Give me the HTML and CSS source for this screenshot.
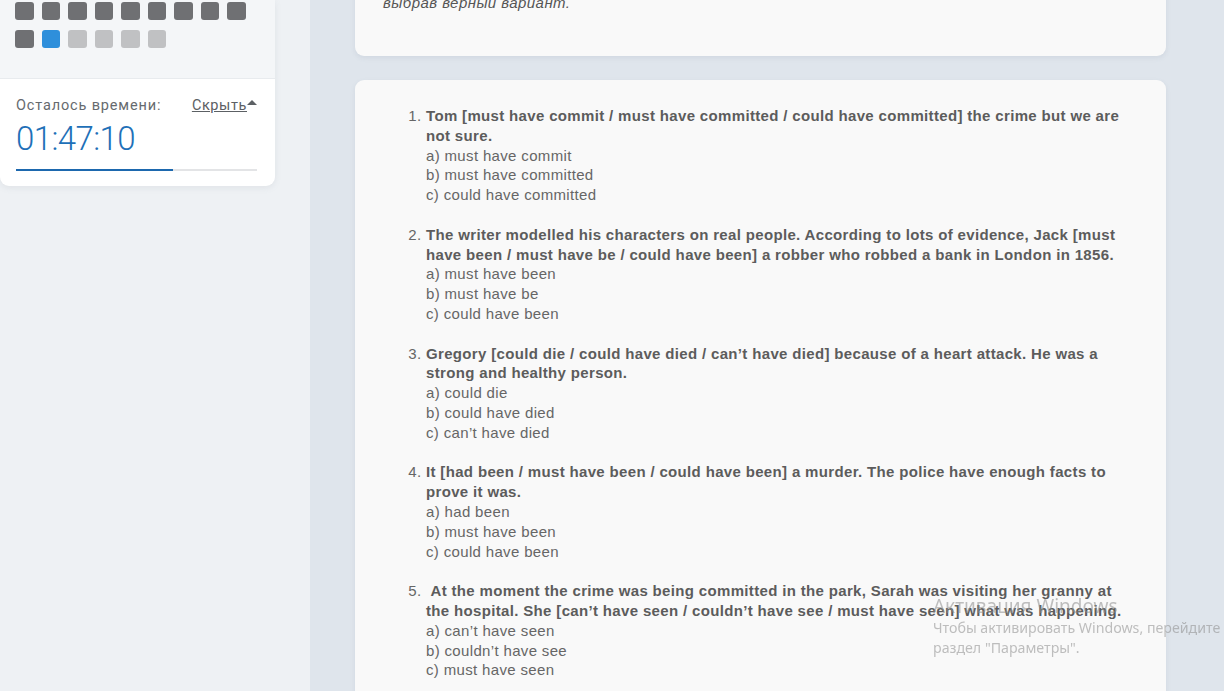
FILE: index.html
```html
<!DOCTYPE html>
<html lang="ru">
<head>
<meta charset="utf-8">
<title>Тест</title>
<link rel="stylesheet" href="styles.css">
</head>
<body>
<div class="page">
  <aside class="sidebar">
    <div class="nav-card">
      <div class="nav-grid">
        <span class="sq done"></span><span class="sq done"></span><span class="sq done"></span>
        <span class="sq done"></span><span class="sq done"></span><span class="sq done"></span>
        <span class="sq done"></span><span class="sq done"></span><span class="sq done"></span>
        <span class="sq done"></span><span class="sq current"></span><span class="sq"></span>
        <span class="sq"></span><span class="sq"></span><span class="sq"></span>
      </div>
      <div class="timer">
        <div class="timer-head">
          <span class="timer-label">Осталось времени:</span>
          <a class="timer-hide">Скрыть</a><span class="caret"></span>
        </div>
        <div class="timer-value">01:47:10</div>
        <div class="progress"><div class="progress-fill" style="width:65%"></div></div>
      </div>
    </div>
  </aside>
  <main class="main">
    <section class="card card-intro">
      <p class="intro">выбрав верный вариант.</p>
    </section>
    <section class="card card-questions">
      <ol class="questions">
        <li>
          <p class="q">Tom [must have commit / must have committed / could have committed] the crime but we are not sure.</p>
          <p class="a">a) must have commit</p>
          <p class="a">b) must have committed</p>
          <p class="a">c) could have committed</p>
        </li>
        <li>
          <p class="q">The writer modelled his characters on real people. According to lots of evidence, Jack [must have been / must have be / could have been] a robber who robbed a bank in London in 1856.</p>
          <p class="a">a) must have been</p>
          <p class="a">b) must have be</p>
          <p class="a">c) could have been</p>
        </li>
        <li>
          <p class="q">Gregory [could die / could have died / can’t have died] because of a heart attack. He was a strong and healthy person.</p>
          <p class="a">a) could die</p>
          <p class="a">b) could have died</p>
          <p class="a">c) can’t have died</p>
        </li>
        <li>
          <p class="q">It [had been / must have been / could have been] a murder. The police have enough facts to prove it was.</p>
          <p class="a">a) had been</p>
          <p class="a">b) must have been</p>
          <p class="a">c) could have been</p>
        </li>
        <li>
          <p class="q">&nbsp;At the moment the crime was being committed in the park, Sarah was visiting her granny at the hospital. She [can’t have seen / couldn’t have see / must have seen] what was happening.</p>
          <p class="a">a) can’t have seen</p>
          <p class="a">b) couldn’t have see</p>
          <p class="a">c) must have seen</p>
        </li>
      </ol>
    </section>
  </main>
</div>
<div class="watermark">
  <div class="wm-title">Активация Windows</div>
  <div class="wm-text">Чтобы активировать Windows, перейдите в<br>раздел "Параметры".</div>
</div>
</body>
</html>
```

FILE: styles.css
```css
* { box-sizing: border-box; }
html, body {
  margin: 0;
  padding: 0;
  height: 691px;
  overflow: hidden;
}
body {
  font-family: "Liberation Sans", Arial, sans-serif;
  background: #dfe5ec;
}
.page {
  display: flex;
  min-height: 691px;
}
.sidebar {
  width: 310px;
  flex: 0 0 310px;
  background: #eef1f4;
  padding-right: 35px;
}
.nav-card {
  background: #ffffff;
  border-radius: 0 0 9px 9px;
  box-shadow: 0 2px 6px rgba(120, 135, 150, 0.12);
  overflow: hidden;
}
.nav-grid {
  background: #f4f6f8;
  padding: 2px 15px 0 15px;
  height: 79px;
  display: grid;
  grid-template-columns: repeat(9, 18.5px);
  grid-auto-rows: 18px;
  column-gap: 8px;
  row-gap: 10px;
  border-bottom: 1px solid #e8ebee;
}
.sq {
  display: block;
  border-radius: 3px;
  background: #c0c1c3;
}
.sq.done { background: #6f7073; }
.sq.current { background: #2e8fdb; }
.timer {
  padding: 17px 18px 15px 16px;
}
.timer-head {
  display: flex;
  align-items: center;
  font-family: Roboto, "Liberation Sans", sans-serif;
  font-size: 14.5px;
  letter-spacing: 0.85px;
  color: #666a6e;
  height: 18px;
}
.timer-label { flex: 1; }
.timer-hide {
  color: #5c6064;
  text-decoration: underline;
  letter-spacing: 0.6px;
}
.caret {
  width: 0;
  height: 0;
  border-left: 5px solid transparent;
  border-right: 5px solid transparent;
  border-bottom: 5px solid #5c6064;
  margin-left: 0;
  margin-top: -6px;
}
.timer-value {
  font-family: Roboto, "Liberation Sans", sans-serif;
  font-weight: 300;
  font-size: 33px;
  line-height: 40px;
  letter-spacing: -0.6px;
  color: #1e70b8;
  margin-top: 5px;
}
.progress {
  height: 2px;
  background: #e3e4e6;
  margin-top: 10px;
}
.progress-fill {
  height: 2px;
  background: #1d68ae;
}
.main {
  flex: 1;
  padding: 0 58px 0 45px;
  display: flex;
  flex-direction: column;
  gap: 24px;
}
.card {
  background: #f9f9f9;
  border-radius: 9px;
  box-shadow: 0 2px 5px rgba(110, 125, 145, 0.12);
}
.card-intro {
  margin-top: -11px;
  padding: 0 28px 40px 28px;
  border-radius: 0 0 9px 9px;
}
.intro {
  margin: 0;
  font-style: italic;
  font-size: 15px;
  letter-spacing: 0.45px;
  line-height: 27px;
  color: #555;
}
.card-questions {
  flex: 1;
  padding: 26px 31px 20px 28px;
  border-radius: 9px 9px 0 0;
}
.questions {
  margin: 0;
  padding-left: 43px;
  font-size: 15px;
  line-height: 19.8px;
  letter-spacing: 0.34px;
  color: #666;
}
.questions li {
  margin-bottom: 19.8px;
}
.questions li::marker {
  color: #666;
}
.q {
  margin: 0;
  font-weight: bold;
  color: #5c5c5c;
}
.a {
  margin: 0;
  color: #666;
}
.watermark {
  position: fixed;
  left: 933px;
  top: 594px;
  font-family: "Noto Sans", "Open Sans", sans-serif;
  color: rgba(140, 140, 140, 0.55);
  white-space: nowrap;
  pointer-events: none;
}
.wm-title {
  font-size: 19px;
  line-height: 24px;
}
.wm-text {
  font-size: 14.2px;
  line-height: 20px;
  margin-top: 0;
}
```
